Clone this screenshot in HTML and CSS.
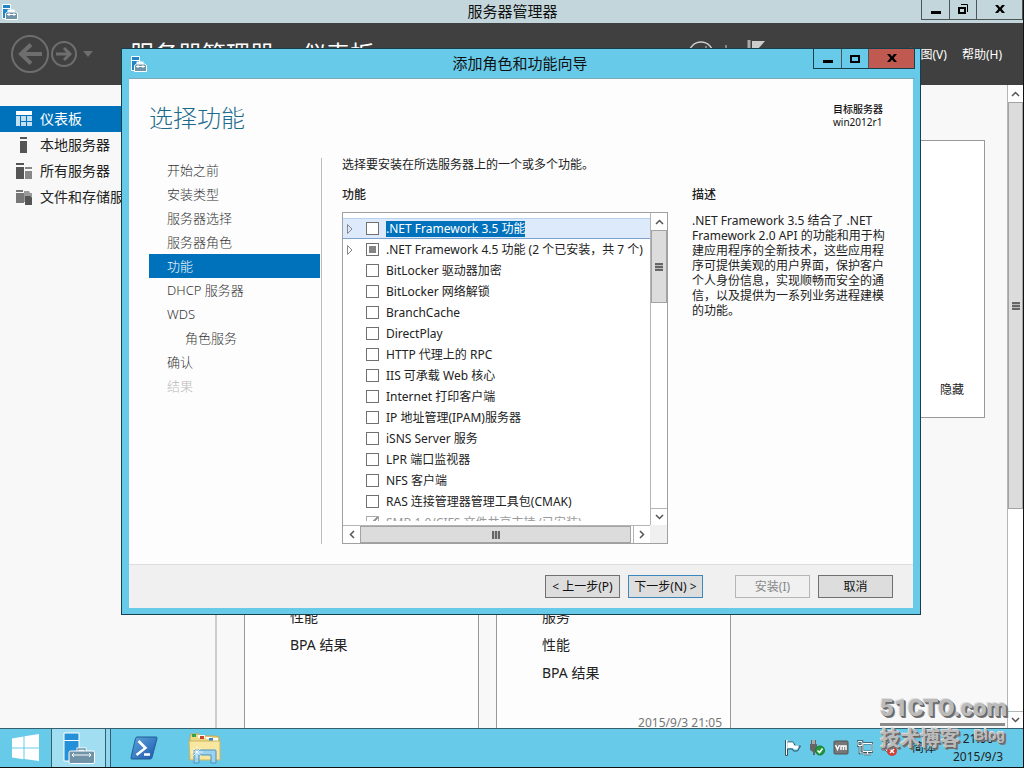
FILE: index.html
```html
<!DOCTYPE html>
<html lang="zh-CN">
<head>
<meta charset="utf-8">
<title>服务器管理器</title>
<link rel="stylesheet" href="styles.css">
</head>
<body>
<svg width="0" height="0" class="defs" aria-hidden="true">
  <symbol id="server" viewBox="0 0 32 32">
    <path d="M1 1h15v28H1z" fill="#2490d8" stroke="#fff"/>
    <path d="M1 8.500h15" stroke="#fff"/>
    <path d="M15 19v-2h7v2" fill="none" stroke="#fff" stroke-width="3"/>
    <path d="M15 19v-2h7v2" fill="none" stroke="#7193a8" stroke-width="1.500"/>
    <rect x="6" y="19" width="25.500" height="12.500" rx="1.500" fill="#7193a8" stroke="#fff"/>
    <path d="M9 23h19M11 21l-2 2 2 2M26 21l2 2-2 2" fill="none" stroke="#fff"/>
  </symbol>
  <symbol id="server-small" viewBox="0 0 16 16">
    <path d="M.5.500h8v14h-8z" fill="#2185c9" stroke="#fff"/>
    <path d="M1 4.500h7" stroke="#fff"/>
    <path d="M6.500 8V6.500h5V8" fill="none" stroke="#fff" stroke-width="2"/>
    <path d="M3.500 15.500V9.500L5.500 8h8l2 1.500v6z" fill="#7193a8" stroke="#fff"/>
    <path d="M5 10.500h9M7 9v3M12 9v3" stroke="#fff"/>
  </symbol>
  <symbol id="up" viewBox="0 0 9 6"><path d="M1 5l3.500-3.500L8 5" fill="none" stroke="#555" stroke-width="1.500"/></symbol>
  <symbol id="down" viewBox="0 0 9 6"><path d="M1 1l3.500 3.500L8 1" fill="none" stroke="#555" stroke-width="1.500"/></symbol>
  <symbol id="left" viewBox="0 0 6 9"><path d="M5 1L1.500 4.500 5 8" fill="none" stroke="#555" stroke-width="1.500"/></symbol>
  <symbol id="right" viewBox="0 0 6 9"><path d="M1 1l3.500 3.500L1 8" fill="none" stroke="#555" stroke-width="1.500"/></symbol>
  <symbol id="min" viewBox="0 0 12 12"><path d="M1 7h10v3H1z"/></symbol>
  <symbol id="close" viewBox="0 0 12 12"><path d="M1 1h3l2 2.500L8 1h3L7.700 5l3.300 4H8L6 6.500 4 9H1l3.300-4z"/></symbol>
</svg>

<div class="desktop">
  <header class="titlebar">
    <svg class="app-icon" width="16" height="16"><use href="#server-small"/></svg>
    <h1>服务器管理器</h1>
    <div class="winbtns">
      <button aria-label="最小化"><svg width="12" height="12"><use href="#min"/></svg></button>
      <button aria-label="还原"><svg width="12" height="12" viewBox="0 0 12 12"><path d="M2 4h6v5H2z" fill="none" stroke="#000" stroke-width="2"/><path d="M4 .5h6.500V8" fill="none" stroke="#000"/></svg></button>
      <button class="wide" aria-label="关闭"><svg width="12" height="12"><use href="#close"/></svg></button>
    </div>
  </header>

  <div class="toolbar">
    <button class="nav-btn" aria-label="后退"><svg width="38" height="38" viewBox="0 0 38 38" fill="none" stroke="#6e6e6e"><circle cx="19" cy="19" r="18" stroke-width="2"/><path d="M31 19H10M20 9.500L10 19l10 9.500" stroke-width="4"/></svg></button>
    <button class="nav-btn" aria-label="前进"><svg width="26" height="26" viewBox="0 0 26 26" fill="none" stroke="#6e6e6e"><circle cx="13" cy="13" r="12" stroke-width="2"/><path d="M5 13h14M13 7l6 6-6 6" stroke-width="3"/></svg></button>
    <svg class="caret" width="10" height="6"><path d="M0 0h10L5 6z" fill="#6e6e6e"/></svg>
    <h2>服务器管理器<span>·</span>仪表板</h2>
    <div class="tools">
      <svg width="78" height="30" viewBox="0 0 78 30"><circle cx="13" cy="15" r="12" fill="none" stroke="#ccc" stroke-width="1.500"/><path d="M18 7v5h-5" fill="none" stroke="#ccc"/><path d="M38 6v16" stroke="#ccc"/><path d="M61 1v26" stroke="#aaa" stroke-width="3"/><path d="M64 2h13l-7 8h-6z" fill="#ccc"/></svg>
    </div>
    <a href="#view">视图(V)</a>
    <a href="#help">帮助(H)</a>
  </div>

  <div class="workspace">
    <nav class="sidebar">
      <a href="#dash" class="on"><svg width="16" height="16"><path d="M0 0h16v4H0z" fill="#fff"/><path d="M0 5h4v10H0zM5 5h5v5H5zM11 5h5v5h-5zM5 11h5v4H5zM11 11h5v4h-5z" fill="#c4e0f3"/></svg>仪表板</a>
      <a href="#local"><svg width="16" height="16"><path d="M4 0h7v2H4zM4 4h7v12H4z" fill="#555"/></svg>本地服务器</a>
      <a href="#all"><svg width="16" height="16"><path d="M0 0h8v2H0zM0 4h8v12H0z" fill="#555"/><path d="M9 4h7v2H9zM9 8h7v8H9z" fill="#888"/></svg>所有服务器</a>
      <a href="#files"><svg width="16" height="16"><path d="M0 1h7v2H0zM0 4h8v10H0z" fill="#777"/><path d="M8 2h5l1 2h2v9H8z" fill="#999"/><path d="M9 7h5l2 2v7H9z" fill="#555"/></svg>文件和存储服务</a>
    </nav>
    <main class="board">
      <section class="welcome"><button>隐藏</button></section>
      <div class="tiles">
        <section class="tile"><p>性能</p><p>BPA 结果</p></section>
        <section class="tile"><p>服务</p><p>性能</p><p>BPA 结果</p><time>2015/9/3 21:05</time></section>
      </div>
    </main>
    <div class="scroll-v page-scroll">
      <button aria-label="向上滚动"><svg width="9" height="6"><use href="#up"/></svg></button>
      <div class="thumb"><i></i></div>
      <button class="end" aria-label="向下滚动"><svg width="9" height="6"><use href="#down"/></svg></button>
    </div>
  </div>

  <footer class="taskbar">
    <button class="start" aria-label="开始"><svg width="28" height="28" viewBox="0 0 28 28"><path d="M0 4.500l11.500-2v11H0zM12.500 2.300L27 0v13.500H12.500zM0 14.500h11.500v10.800L0 23.500zM12.500 14.500H27V27l-14.500-2z" fill="#fff"/></svg></button>
    <button class="task" aria-label="服务器管理器"><svg width="32" height="32"><use href="#server"/></svg></button>
    <button class="launch" aria-label="PowerShell"><svg width="28" height="24" viewBox="0 0 28 24"><defs><linearGradient id="ps" x1="0" y1="0" x2="1" y2="1"><stop offset="0" stop-color="#5fa8dc"/><stop offset="1" stop-color="#1b55ad"/></linearGradient></defs><path d="M7 1h19q1.500 0 1 1.500l-5 19Q21.500 23 20 23H2Q.5 23 1 21.500l4.500-19Q6 1 7 1z" fill="url(#ps)" stroke="#1f5f95"/><path d="M8.500 5l7 7-9 7M14 18.500h6" fill="none" stroke="#fff" stroke-width="2.500"/></svg></button>
    <button class="launch" aria-label="文件资源管理器"><svg width="34" height="32" viewBox="0 0 34 32"><path d="M2 5l1-3h8l2 2h15l3 1v22H2z" fill="#eed884" stroke="#c6a750"/><path d="M10 3h7v3h-7zM18 5h6v2h-6zM25 6h5v3h-5z" fill="#fff"/><path d="M4 2h4v3H4z" fill="#33a24b"/><path d="M12 4h4v3h-4z" fill="#c7462c"/><path d="M21 6h4v3h-4z" fill="#3b86c9"/><path d="M1 9h31v19H2z" fill="#f7e7a0" stroke="#cfb461"/><path d="M6 19q0-1 1-1h20q1 0 1 1v12h-5v-8H11v8H6z" fill="#9bd2ee" stroke="#4a92bd"/><path d="M9 14v12M3 20h12M5 16l8 8M13 16l-8 8" stroke="#fff" stroke-width=".7"/></svg></button>
    <div class="tray">
      <svg width="16" height="16" viewBox="0 0 16 16"><path d="M1.500 0v16" stroke="#fff" stroke-width="2"/><path d="M.5 0v15.500h2V9h5l1 2h4l3-5h-5L8 2H2.500" fill="none" stroke="#36525f"/><path d="M3 2.500h5l1 3h5l-2 4H9L8 8H3z" fill="#fff"/></svg>
      <svg width="16" height="16" viewBox="0 0 16 16"><path d="M2 0h5v4h1v6l-2 2v3H4v-3l-3-2V4h1z" fill="#666"/><path d="M3 0h3v4H3z" fill="#aaa"/><circle cx="11" cy="10.500" r="4.500" fill="#239b3a" stroke="#157a29"/><path d="M8.500 10.500l2 2 3-4" fill="none" stroke="#fff" stroke-width="1.500"/></svg>
      <svg width="16" height="16" viewBox="0 0 16 16"><rect x="1" y="1" width="14" height="13" rx="1" fill="#777" stroke="#555"/><path d="M2.500 5L4.500 9.500 6.500 5M8 10V6h2.500v4M10.500 6H13v4" fill="none" stroke="#fff" stroke-width="1.500"/></svg>
      <svg width="16" height="16" viewBox="0 0 16 16"><path d="M6 3.500h9v8H6zM7 14h7M10.500 11v3M1 1.500h4v4H1zM3 5.500V13h3" fill="none" stroke="#36525f" stroke-width="2.500"/><path d="M6 3.500h9v8H6zM7 14h7M10.500 11v3M1 1.500h4v4H1zM3 5.500V13h3" fill="none" stroke="#fff"/><path d="M7 4.500h7v6H7z" fill="#67cae9"/></svg>
      <svg width="16" height="16" viewBox="0 0 16 16"><path d="M1 6h3l4-4v12l-4-4H1z" fill="#eee" stroke="#666"/><circle cx="11" cy="11" r="5" fill="#d33b32"/><path d="M9 9l4 4M13 9l-4 4" stroke="#fff" stroke-width="1.500"/></svg>
      <span class="ime">简体</span>
      <div class="clock"><span>21:06</span><span>2015/9/3</span></div>
    </div>
  </footer>

  <div class="dialog" role="dialog" aria-labelledby="dlg-title">
    <div class="dlg-bar">
      <svg class="app-icon" width="16" height="16"><use href="#server-small"/></svg>
      <h2 id="dlg-title">添加角色和功能向导</h2>
      <div class="winbtns">
        <button aria-label="最小化"><svg width="12" height="12"><use href="#min"/></svg></button>
        <button aria-label="最大化"><svg width="12" height="12" viewBox="0 0 12 12"><path d="M2 3h8v6H2z" fill="none" stroke="#000" stroke-width="2"/></svg></button>
        <button class="wide red" aria-label="关闭"><svg width="12" height="12"><use href="#close"/></svg></button>
      </div>
    </div>
    <div class="dlg-body">
      <div class="dlg-head">
        <h3>选择功能</h3>
        <p class="target"><b>目标服务器</b><br>win2012r1</p>
      </div>
      <div class="wizard">
        <nav class="steps">
          <a href="#s1">开始之前</a>
          <a href="#s2">安装类型</a>
          <a href="#s3">服务器选择</a>
          <a href="#s4">服务器角色</a>
          <a href="#s5" class="on">功能</a>
          <a href="#s6">DHCP 服务器</a>
          <a href="#s7">WDS</a>
          <a href="#s8" class="sub">角色服务</a>
          <a href="#s9">确认</a>
          <a href="#s10" class="off">结果</a>
        </nav>
        <div class="content">
          <p class="lead">选择要安装在所选服务器上的一个或多个功能。</p>
          <div class="columns">
            <section class="features">
              <h4>功能</h4>
              <div class="listbox">
                <div class="rows">
                  <label class="row sel"><svg class="exp" width="6" height="12"><path d="M.5 1.500v9L5 6z" fill="none" stroke="#888"/></svg><input type="checkbox"><span>.NET Framework 3.5 功能</span></label>
                  <label class="row"><svg class="exp" width="6" height="12"><path d="M.5 1.500v9L5 6z" fill="none" stroke="#888"/></svg><input type="checkbox" class="partial"><span>.NET Framework 4.5 功能 (2 个已安装，共 7 个)</span></label>
                  <label class="row"><i class="exp"></i><input type="checkbox"><span>BitLocker 驱动器加密</span></label>
                  <label class="row"><i class="exp"></i><input type="checkbox"><span>BitLocker 网络解锁</span></label>
                  <label class="row"><i class="exp"></i><input type="checkbox"><span>BranchCache</span></label>
                  <label class="row"><i class="exp"></i><input type="checkbox"><span>DirectPlay</span></label>
                  <label class="row"><i class="exp"></i><input type="checkbox"><span>HTTP 代理上的 RPC</span></label>
                  <label class="row"><i class="exp"></i><input type="checkbox"><span>IIS 可承载 Web 核心</span></label>
                  <label class="row"><i class="exp"></i><input type="checkbox"><span>Internet 打印客户端</span></label>
                  <label class="row"><i class="exp"></i><input type="checkbox"><span>IP 地址管理(IPAM)服务器</span></label>
                  <label class="row"><i class="exp"></i><input type="checkbox"><span>iSNS Server 服务</span></label>
                  <label class="row"><i class="exp"></i><input type="checkbox"><span>LPR 端口监视器</span></label>
                  <label class="row"><i class="exp"></i><input type="checkbox"><span>NFS 客户端</span></label>
                  <label class="row"><i class="exp"></i><input type="checkbox"><span>RAS 连接管理器管理工具包(CMAK)</span></label>
                  <label class="row dim"><i class="exp"></i><input type="checkbox" checked disabled><span>SMB 1.0/CIFS 文件共享支持 (已安装)</span></label>
                </div>
                <div class="scroll-v">
                  <button aria-label="向上滚动"><svg width="9" height="6"><use href="#up"/></svg></button>
                  <div class="thumb"><i></i></div>
                  <button class="end" aria-label="向下滚动"><svg width="9" height="6"><use href="#down"/></svg></button>
                </div>
                <div class="scroll-h">
                  <button aria-label="向左滚动"><svg width="6" height="9"><use href="#left"/></svg></button>
                  <div class="thumb"><i></i></div>
                  <button aria-label="向右滚动"><svg width="6" height="9"><use href="#right"/></svg></button>
                </div>
                <div class="corner"></div>
              </div>
            </section>
            <section class="desc">
              <h4>描述</h4>
              <p>.NET Framework 3.5 结合了 .NET<br>Framework 2.0 API 的功能和用于构<br>建应用程序的全新技术，这些应用程<br>序可提供美观的用户界面，保护客户<br>个人身份信息，实现顺畅而安全的通<br>信，以及提供为一系列业务进程建模<br>的功能。</p>
            </section>
          </div>
        </div>
      </div>
      <div class="dlg-foot">
        <button>&lt; 上一步(P)</button>
        <button class="primary">下一步(N) &gt;</button>
        <button class="gap" disabled>安装(I)</button>
        <button>取消</button>
      </div>
    </div>
  </div>

  <div class="watermark">
    <strong>51CTO.com</strong>
    <div><b>技术博客</b><em>Blog</em></div>
  </div>
</div>
</body>
</html>
```
FILE: styles.css
```css
* { box-sizing: border-box; }
body, h1, h2, h3, h4, p { margin: 0; font-weight: 400; }
body {
  font: 12px/16px "Noto Sans", "Noto Sans CJK SC", sans-serif;
  color: #222;
  overflow: hidden;
}
button {
  font: inherit;
  color: inherit;
  margin: 0;
  padding: 0;
  border: 0;
  background: none;
  display: flex;
  align-items: center;
  justify-content: center;
  white-space: nowrap;
}
a { color: inherit; text-decoration: none; white-space: nowrap; }
svg { display: block; flex: none; }
.defs { position: absolute; }

.desktop {
  position: relative;
  height: 100vh;
  display: flex;
  flex-direction: column;
  border-right: 1px solid #111;
  border-bottom: 1px solid #111;
  overflow: hidden;
}

/* window bars */
.titlebar, .dlg-bar {
  flex: none;
  display: grid;
  grid-template-columns: 1fr auto 1fr;
  align-items: center;
}
.titlebar { height: 23px; background: #c3d6db; padding: 0 0 0 2px; }
.titlebar h1, .dlg-bar h2 { font-size: 15px; line-height: 20px; padding-bottom: 2px; color: #111; }
.winbtns {
  display: flex;
  align-self: start;
  justify-self: end;
  height: 20px;
  border: 1px solid #4d5559;
  border-top: 0;
}
.winbtns button { width: 27px; }
.winbtns button + button { border-left: 1px solid #4d5559; }
.winbtns .wide { width: 46px; }
.winbtns .red { background: #c0594f; }

.toolbar {
  flex: none;
  height: 62px;
  display: flex;
  align-items: center;
  background: #404040;
  color: #fff;
  padding: 0 21px 0 11px;
}
.toolbar a { padding-top: 2px; }
.nav-btn { margin-right: 2px; }
.caret { margin: 0 37px 0 4px; }
.toolbar h2 { font-size: 24px; line-height: 32px; white-space: nowrap; }
.toolbar h2 span { display: inline-block; width: 28px; text-align: center; }
.tools { display: flex; margin-left: auto; margin-right: 143px; }
.toolbar a + a { margin-left: 15px; }

/* server manager */
.workspace { flex: 1; min-height: 0; display: flex; background: #f8f8f8; }
.sidebar {
  width: 217px;
  flex: none;
  padding-top: 21px;
  border-right: 2px solid #ccc;
  font-size: 14px;
}
.sidebar a { display: flex; align-items: center; gap: 8px; height: 26px; padding-left: 16px; }
.sidebar .on { background: #0072bb; color: #fff; }
.board { flex: 1; padding: 55px 22px 0 27px; overflow: hidden; }
.welcome {
  height: 278px;
  border: 1px solid #999;
  background: #fff;
  display: flex;
  align-items: flex-end;
  justify-content: flex-end;
  padding: 19px 20px;
}
.tiles { display: flex; gap: 17px; margin-top: 34px; }
.tile {
  width: 235px;
  height: 320px;
  padding: 150px 8px 0 45px;
  border: 1px solid #999;
  background: #fdfdfd;
  font-size: 14px;
  line-height: 28px;
}
.tile time { display: block; margin-top: 28px; text-align: right; font-size: 12px; line-height: 16px; color: #777; }

/* scroll bars */
.scroll-v { display: flex; flex-direction: column; width: 17px; background: #fff; border-left: 1px solid #b5b5b5; }
.scroll-v button, .scroll-h button { flex: none; width: 16px; height: 17px; background: #fff; }
.scroll-v .end { margin-top: auto; border-top: 1px solid #b5b5b5; }
.thumb { display: flex; align-items: center; justify-content: center; background: #dcdcdc; border: 1px solid #a3a3a3; }
.thumb i { width: 8px; height: 8px; background: repeating-linear-gradient(#666 0 2px, #bbb 2px 3px); }
.scroll-v .thumb { height: 73px; }
.page-scroll { width: 16px; }
.page-scroll .thumb { height: 407px; }
.page-scroll button { width: 15px; }

/* taskbar */
.taskbar {
  flex: none;
  height: 39px;
  display: flex;
  background: #67cae9;
  border-top: 1px solid #355f6d;
}
.start { width: 51px; }
.task { width: 60px; background: #a1def2; border: 1px solid #355f6d; border-top: 0; border-bottom: 0; box-shadow: inset -4px 0 #8fd6ee, inset -5px 0 #355f6d; padding-right: 5px; }
.launch { width: 62px; padding-left: 4px; }
.launch + .launch { padding-left: 2px; }
.tray { margin-left: auto; display: flex; align-items: center; gap: 8px; padding-right: 19px; }
.ime { margin-left: 7px; }
.clock { width: 52px; margin-left: 8px; display: flex; flex-direction: column; align-items: center; line-height: 18px; }

/* wizard */
.dialog {
  position: absolute;
  inset: 48px 102px 152px 121px;
  display: flex;
  flex-direction: column;
  border: 1px solid #17404f;
  background: #67cae9;
  padding: 0 7px 6px;
}
.dlg-bar { height: 30px; margin-right: -2px; border-bottom: 1px solid #7fa7b4; padding-left: 2px; }
.dlg-bar h2 { margin-right: 6px; }
.dlg-bar .winbtns { border-color: #17404f; }
.dlg-body { flex: 1; min-height: 0; display: flex; flex-direction: column; background: #fdfdfd; }
.dlg-head { display: flex; justify-content: space-between; padding: 23px 30px 0 20px; height: 79px; }
.dlg-head h3 { font-size: 24px; line-height: 32px; font-weight: 300; color: #1c6a8c; }
.target { padding-top: 1px; font-size: 10px; line-height: 13px; color: #111; }
.target b { font-weight: 500; }
.wizard { flex: 1; min-height: 0; display: flex; padding: 0 20px 20px; }
.steps { width: 173px; flex: none; border-right: 1px solid #bbb; padding-right: 1px; font-size: 13px; font-weight: 300; color: #333; }
.steps a { display: block; height: 24px; line-height: 24px; padding-left: 18px; }
.steps .sub { padding-left: 36px; }
.steps .on { background: #0072bb; color: #fff; }
.steps .off { color: #bbb; }
.content { flex: 1; padding-left: 20px; display: flex; flex-direction: column; }
.lead { line-height: 14px; }
.columns { flex: 1; min-height: 0; display: flex; gap: 24px; padding-top: 13px; }
.features { flex: 1; display: flex; flex-direction: column; }
h4 { font-size: 12px; line-height: 20px; font-weight: 500; }
.listbox {
  flex: 1;
  min-height: 0;
  margin-top: 7px;
  display: grid;
  grid-template: minmax(0, 1fr) 18px / minmax(0, 1fr) 17px;
  border: 1px solid #a0a0a0;
  background: #fff;
}
.rows { margin: 5px 0 4px; overflow: hidden; }
.row { display: flex; align-items: center; height: 21px; padding-left: 4px; border: 1px solid transparent; border-width: 1px 0; white-space: nowrap; }
.row.sel { background: #dceafc; border-color: #b9d1ee; border-bottom-color: #7da2ce; }
.row.sel span { background: #0072bb; color: #fff; }
.exp { width: 6px; margin-right: 13px; flex: none; }
.row input {
  appearance: none;
  flex: none;
  width: 13px;
  height: 13px;
  margin: 0 7px 0 0;
  border: 1px solid #707070;
  background: #fff;
}
.row .partial { background: #848484; box-shadow: inset 0 0 0 2px #fff; }
.dim { color: #999; }
.row input:checked { border-color: #aaa; background: linear-gradient(135deg, transparent 45%, #999 45% 58%, transparent 58%); }
.scroll-h { display: flex; border-top: 1px solid #b5b5b5; background: #fff; }
.scroll-h button { height: 17px; width: 17px; }
.scroll-h .thumb { flex: 1; margin-right: 2px; }
.scroll-h .thumb i { background: repeating-linear-gradient(90deg, #666 0 2px, #bbb 2px 3px); }
.scroll-h button:last-child { border-left: 1px solid #b5b5b5; }
.corner { background: #f0f0f0; }
.desc { width: 201px; flex: none; }
.desc p { margin-top: 8px; line-height: 15px; white-space: nowrap; }
.dlg-foot {
  flex: none;
  display: flex;
  justify-content: flex-end;
  gap: 8px;
  padding: 10px 20px;
  background: #f0f0f0;
  border-top: 1px solid #ddd;
}
.dlg-foot button { width: 75px; height: 23px; border: 1px solid #707070; background: #ddd; color: #111; }
.dlg-foot .primary { border-color: #3c87bd; }
.dlg-foot .gap { margin-left: 24px; }
.dlg-foot button:disabled { background: #f0f0f0; border-color: #b5b5b5; color: #888; }

/* site mark laid over the screen */
.watermark { position: absolute; right: 18px; bottom: 15px; width: 125px; color: #bbb; text-shadow: 1px 1px #666, 2px 2px #777, -1px -1px #ddd; pointer-events: none; }
.watermark strong { display: block; font: 900 24px/30px Roboto, "Liberation Sans", sans-serif; border-bottom: 3px solid #8a8a8a; }
.watermark div { display: flex; justify-content: space-between; }
.watermark b { font-size: 20px; line-height: 26px; }
.watermark em { font: 700 14px/18px "Liberation Sans", sans-serif; }
```
